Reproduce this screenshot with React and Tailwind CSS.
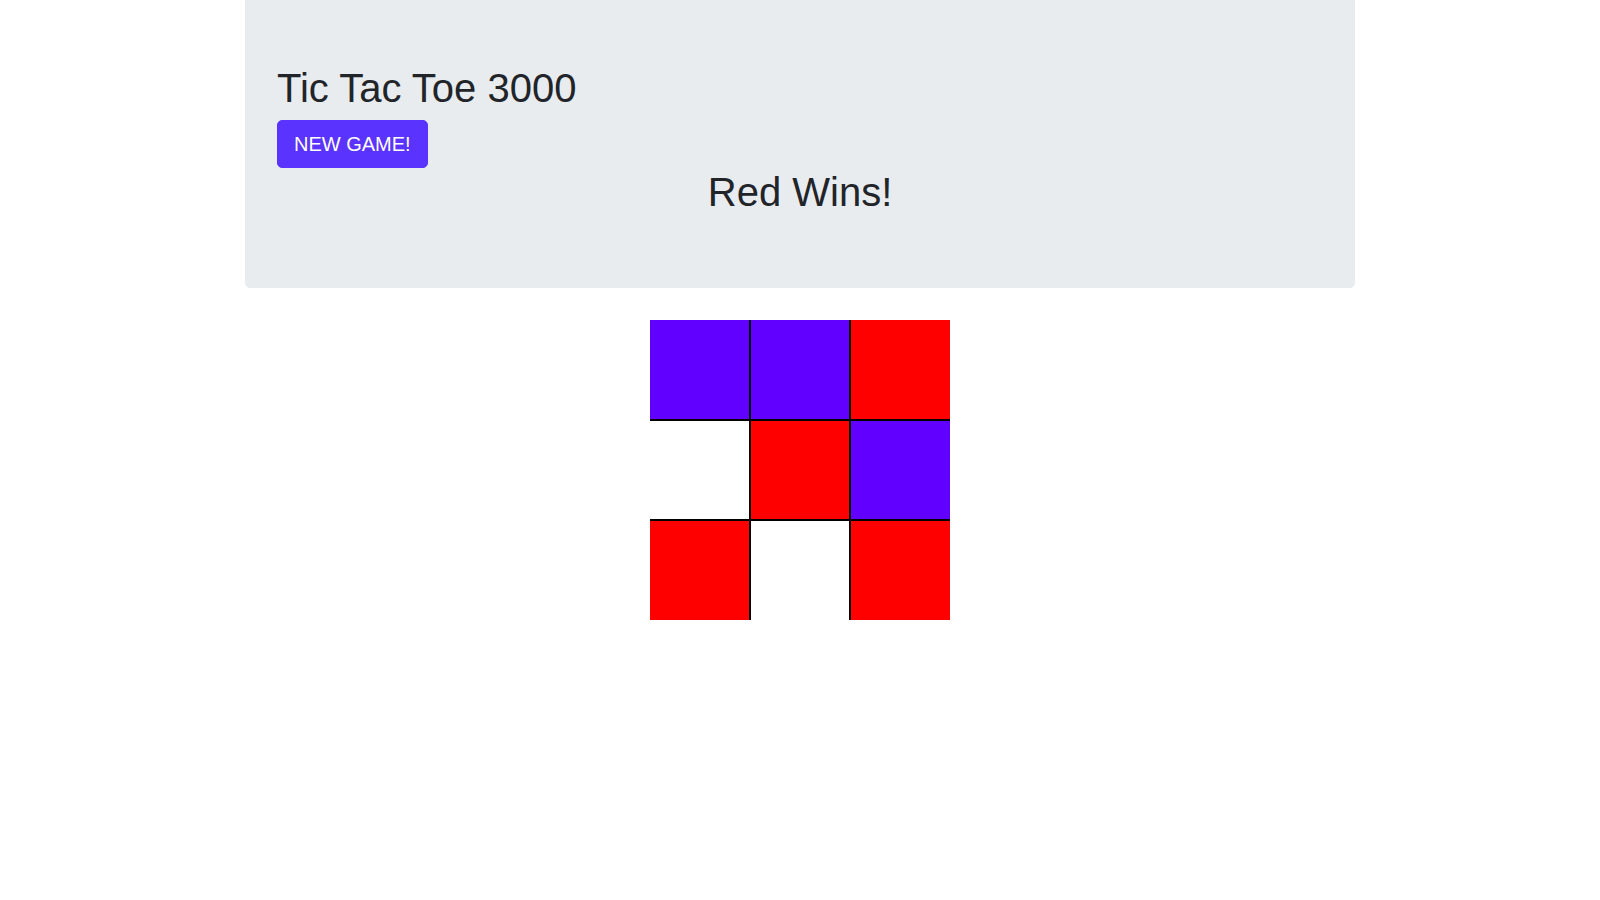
// Tic Tac Toe 3000 — finished game board

const BOARD = ['blue', 'blue', 'red', null, 'red', 'blue', 'red', null, 'red'];

const CELL_COLORS = {
    red: 'bg-[#ff0000]',
    blue: 'bg-[#6100ff]',
};

const COL_BORDERS = ['border-r', 'border-l border-r', 'border-l'];
const ROW_BORDERS = ['border-b', 'border-t border-b', 'border-t'];

function Cell({ value, index }) {
    const col = index % 3;
    const row = Math.floor(index / 3);
    const fill = value ? CELL_COLORS[value] : 'bg-white';
    return (
        <div className={`w-[100px] h-[100px] box-border border-black ${COL_BORDERS[col]} ${ROW_BORDERS[row]} ${fill}`} />
    );
}

export default function App() {
    return (
        <div className="min-h-[900px] bg-white text-[#212529]" style={{ fontFamily: '"Liberation Sans", Arial, sans-serif' }}>
            <div className="w-[1110px] mx-auto">
                <div className="bg-[#e9ecef] rounded-b-[5px] px-8 py-16 mb-8">
                    <h1 className="text-[40px] leading-[48px] font-normal mb-2">Tic Tac Toe 3000</h1>
                    <button className="h-[48px] px-4 text-[20px] leading-[30px] text-white bg-[#5a33ff] border border-[#5a33ff] rounded-[5px]">
                        NEW GAME!
                    </button>
                    <h1 className="text-[40px] leading-[48px] font-normal mb-2 text-center">Red Wins!</h1>
                </div>
                <div className="grid grid-cols-3 w-[300px] mx-auto">
                    {BOARD.map((v, i) => <Cell key={i} value={v} index={i} />)}
                </div>
            </div>
        </div>
    );
}
